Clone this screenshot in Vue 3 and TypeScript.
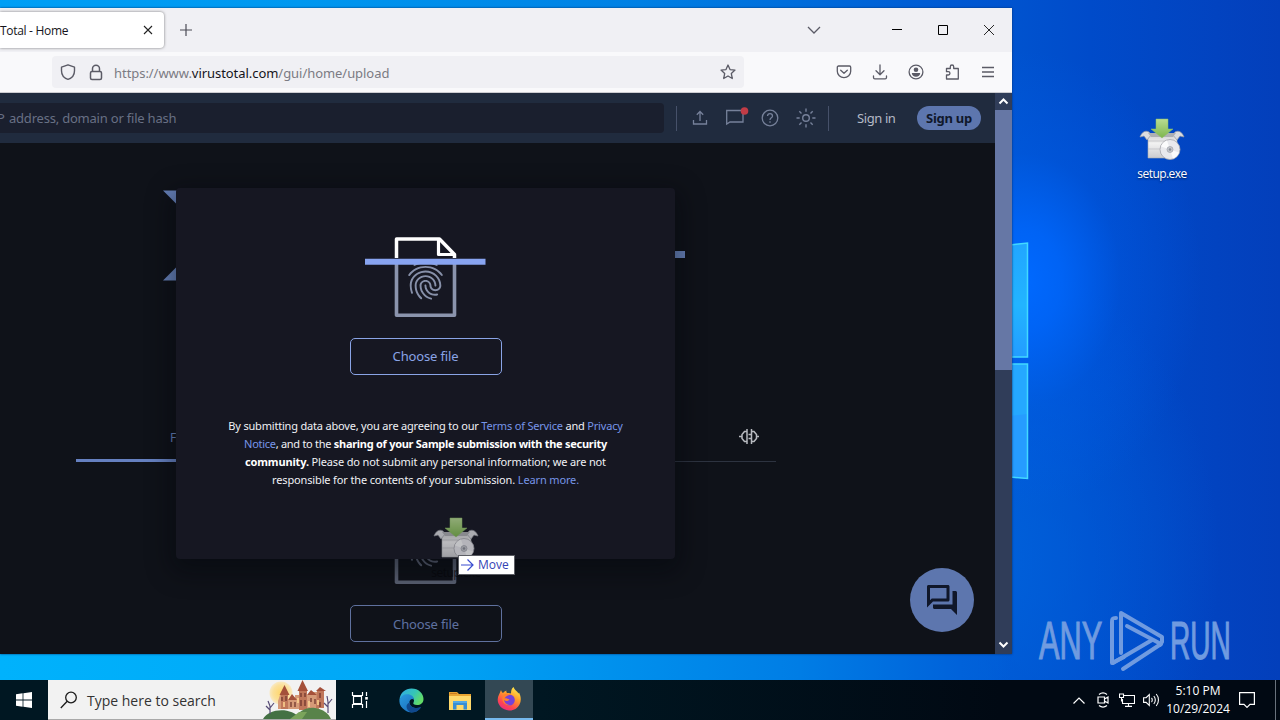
<script setup lang="ts">
interface Segment { text: string; kind?: 'link' | 'strong' }
const terms: Segment[][] = [
  [
    { text: 'By submitting data above, you are agreeing to our ' },
    { text: 'Terms of Service', kind: 'link' },
    { text: ' and ' },
    { text: 'Privacy', kind: 'link' },
  ],
  [
    { text: 'Notice', kind: 'link' },
    { text: ', and to the ' },
    { text: 'sharing of your Sample submission with the security', kind: 'strong' },
  ],
  [
    { text: 'community.', kind: 'strong' },
    { text: ' Please do not submit any personal information; we are not' },
  ],
  [
    { text: 'responsible for the contents of your submission. ' },
    { text: 'Learn more.', kind: 'link' },
  ],
]
</script>

<template>
  <div class="screen">
    <svg class="symbols" width="0" height="0">
      <defs>
        <linearGradient id="arrowGreen" x1="0" y1="0" x2="0" y2="1">
          <stop offset="0" stop-color="#b9dc93" /><stop offset="1" stop-color="#7db64c" />
        </linearGradient>
        <linearGradient id="boxGrey" x1="0" y1="0" x2="0" y2="1">
          <stop offset="0" stop-color="#cfcfd0" /><stop offset=".4" stop-color="#f1f1f1" /><stop offset="1" stop-color="#cccccf" />
        </linearGradient>
        <symbol id="setup" viewBox="0 0 46 43">
          <path d="M9 16h29v21l-2 3H9z" fill="url(#boxGrey)" stroke="#a9abb0" stroke-width=".6" />
          <path d="M9 23h20M9 31h16" stroke="#bcbcc0" stroke-width=".7" />
          <path d="M10 14C6 12 3 14 1 19l4-1 3 4 4-5zM36 14c4-2 7 0 9 5l-4-1-3 4-4-5z" fill="#dcdde0" stroke="#9a9ca3" stroke-width=".7" />
          <path d="M9 15h28l-3 4H12z" fill="#aeb0b3" />
          <path d="M17 1h12v10h5L23 20 12 11h5z" fill="url(#arrowGreen)" stroke="#8fbf68" stroke-width=".5" />
          <circle cx="31" cy="31.500" r="10" fill="#e9e9ed" stroke="#a4a5ab" stroke-width=".8" />
          <path d="m31 31.500-9-3a9 9 0 0 1 6-6zM31 31.500l9 3a9 9 0 0 1-6 6z" fill="#fff" opacity=".8" />
          <circle cx="31" cy="31.500" r="3" fill="#c7c9ce" stroke="#9496a0" stroke-width=".6" />
          <circle cx="31" cy="31.500" r="1.300" fill="#8a8d96" />
        </symbol>
        <symbol id="doc" viewBox="0 0 122 82">
          <g fill="none" stroke-linejoin="round">
            <path d="M31.500 22V3h43L89.500 18.500V22" stroke="#fff" stroke-width="3.500" />
            <path d="M73.500 3v15.500H89" stroke="#fff" stroke-width="3.200" />
            <path d="M31.500 26v53.200h58V26" stroke="#8b94ad" stroke-width="3.600" />
          </g>
          <path transform="translate(37.500 21.400) scale(1.920)" fill="#8790a9" d="M17.810 4.470c-.08 0-.16-.02-.23-.06C15.660 3.420 14 3 12.010 3c-1.980 0-3.860.47-5.570 1.410-.24.13-.54.04-.68-.2-.13-.24-.04-.55.2-.68C7.820 2.520 9.860 2 12.010 2c2.130 0 3.990.47 6.030 1.520.25.13.34.43.21.67-.09.18-.26.28-.44.28zM3.500 9.720c-.1 0-.2-.03-.29-.09-.23-.16-.28-.47-.12-.7.99-1.400 2.250-2.500 3.750-3.270C9.980 4.040 14 4.030 17.150 5.650c1.500.77 2.760 1.860 3.750 3.250.16.22.11.54-.12.7-.23.16-.54.11-.7-.12-.9-1.260-2.040-2.250-3.390-2.940-2.870-1.470-6.540-1.470-9.400.01-1.360.7-2.500 1.700-3.400 2.960-.08.14-.23.21-.39.21zm6.250 12.070c-.13 0-.26-.05-.35-.15-.87-.87-1.340-1.430-2.010-2.640-.69-1.230-1.050-2.730-1.050-4.340 0-2.970 2.540-5.390 5.660-5.390s5.660 2.420 5.660 5.390c0 .28-.22.5-.5.5s-.5-.22-.5-.5c0-2.420-2.090-4.390-4.660-4.390-2.570 0-4.660 1.970-4.660 4.390 0 1.440.32 2.770.93 3.850.64 1.150 1.080 1.640 1.850 2.420.19.2.19.51 0 .71-.11.1-.24.15-.37.15zm7.170-1.850c-1.190 0-2.240-.3-3.100-.89-1.490-1.010-2.380-2.650-2.380-4.390 0-.28.22-.5.5-.5s.5.22.5.5c0 1.410.72 2.740 1.940 3.560.71.48 1.540.71 2.540.71.24 0 .64-.03 1.040-.1.27-.05.53.13.58.41.05.27-.13.53-.41.58-.57.11-1.070.12-1.210.12zM14.910 22c-.04 0-.09-.01-.13-.02-1.590-.44-2.630-1.030-3.720-2.100-1.400-1.390-2.170-3.240-2.170-5.220 0-1.620 1.380-2.940 3.080-2.940 1.700 0 3.080 1.320 3.080 2.940 0 1.070.93 1.940 2.080 1.940s2.080-.87 2.080-1.940c0-3.770-3.250-6.830-7.250-6.830-2.840 0-5.440 1.580-6.610 4.030-.39.81-.59 1.760-.59 2.800 0 .78.07 2.010.67 3.610.1.26-.03.55-.29.64-.26.1-.55-.04-.64-.29-.49-1.310-.73-2.610-.73-3.960 0-1.200.23-2.290.68-3.240 1.330-2.790 4.280-4.600 7.510-4.600 4.550 0 8.250 3.510 8.250 7.830 0 1.620-1.380 2.940-3.080 2.940s-3.080-1.320-3.080-2.940c0-1.070-.93-1.940-2.080-1.940s-2.080.87-2.080 1.940c0 1.710.66 3.310 1.870 4.510.95.94 1.860 1.460 3.270 1.850.27.07.42.35.35.61-.05.23-.26.38-.47.38z" />
          <path d="M0 22.800h120.500v6H0z" fill="#88a4f1" />
        </symbol>
      </defs>
    </svg>

    <main class="desktop">
      <svg class="wallpaper-logo" viewBox="0 0 30 240" width="30" height="240">
        <defs>
          <linearGradient id="pane" x1="0" y1="0" x2="0" y2="1">
            <stop offset="0" stop-color="#21a6ff" /><stop offset=".55" stop-color="#22b4ff" /><stop offset="1" stop-color="#239cff" />
          </linearGradient>
        </defs>
        <path d="M0 5 18 3v114H0z" fill="url(#pane)" /><path d="M0 124h18v115l-18-2z" fill="#269cff" /><path d="M0 124h18v50L0 176z" fill="#25a8ff" />
        <path d="M0 5 17.500 3v114H0M0 124h17.500v114.500L0 237" fill="none" stroke="#42d9ff" stroke-width="1.500" />
      </svg>

      <div class="shortcut">
        <svg width="46" height="43"><use href="#setup" /></svg>
        <span>setup.exe</span>
      </div>

      <div class="watermark">
        <span class="any">ANY</span>
        <svg width="56" height="62" viewBox="0 0 56 62" fill="none" stroke="#709be0" stroke-width="4" stroke-linejoin="round" stroke-linecap="round">
          <path d="M7 8C3 8 3 9 3 12v41L15 47" /><path d="M12 43V3l41 24v5l-2 3" /><path d="m18 16 34 18-38 25" /><path d="M4 53 43 30" />
        </svg>
        <span class="run">RUN</span>
      </div>

      <section class="window">
        <div class="tabbar">
          <div class="tab"><span class="tab-title">Total - Home</span>
            <svg width="10" height="10" viewBox="0 0 10 10"><path d="m1 1 8 8M9 1 1 9" stroke="#222" stroke-width="1.100" /></svg>
          </div>
          <svg class="new-tab" width="12" height="12" viewBox="0 0 12 12"><path d="M6 0v12M0 6h12" stroke="#4b4b55" stroke-width="1.200" /></svg>
          <svg class="tabs-more" width="14" height="8" viewBox="0 0 14 8"><path d="m1 1 6 6 6-6" fill="none" stroke="#5b5b66" stroke-width="1.300" /></svg>
          <div class="caption">
            <svg width="10" height="10" viewBox="0 0 10 10"><path d="M0 4.500h10" stroke="#000" /></svg>
            <svg width="10" height="10" viewBox="0 0 10 10"><path d="M.500.500h9v9h-9z" fill="none" stroke="#000" /></svg>
            <svg width="10" height="10" viewBox="0 0 10 10"><path d="m0 0 10 10M10 0 0 10" stroke="#111" stroke-width=".9" /></svg>
          </div>
        </div>

        <div class="toolbar">
          <div class="urlbar">
            <svg width="16" height="16" viewBox="0 0 16 16" fill="none" stroke="#5b5b66" stroke-width="1.400" stroke-linejoin="round"><path d="m8 .8 6.500 2.400v3.500C14.500 11 12 14 8 15.300 4 14 1.500 11 1.500 6.700V3.200z" /></svg>
            <svg class="lock" width="14" height="17" viewBox="0 0 14 17" fill="none" stroke="#5b5b66" stroke-width="1.500"><rect x="1.500" y="7.500" width="11" height="8" rx="1.500" /><path d="M3.500 7.500V4.800a3.500 3.500 0 0 1 7 0v2.700" /></svg>
            <span class="url">https://www.<b>virustotal.com</b>/gui/home/upload</span>
            <svg width="16" height="16" viewBox="0 0 16 16" fill="none" stroke="#5b5b66" stroke-width="1.300" stroke-linejoin="round"><path d="m8 1 2 4.600 5 .5-3.700 3.400 1 5L8 12l-4.300 2.500 1-5L1 6.100l5-.5z" /></svg>
          </div>
          <div class="tools">
            <svg width="16" height="16" viewBox="0 0 16 16" fill="none" stroke="#5b5b66" stroke-width="1.300" stroke-linecap="round" stroke-linejoin="round"><path d="M2.500 2h11c.7 0 1.200.5 1.200 1.200v4c0 3.500-3 6.500-6.700 6.500S1.300 10.700 1.300 7.200v-4C1.300 2.500 1.800 2 2.500 2zM4.700 6.300 8 9.300l3.300-3" /></svg>
            <svg width="16" height="16" viewBox="0 0 16 16" fill="none" stroke="#5b5b66" stroke-width="1.300" stroke-linecap="round" stroke-linejoin="round"><path d="M8 1v9.500M4 6.800l4 4 4-4M1.500 12v1.500c0 .8.500 1.300 1.300 1.300h10.400c.8 0 1.300-.5 1.300-1.300V12" /></svg>
            <svg width="16" height="16" viewBox="0 0 16 16"><circle cx="8" cy="8" r="6.900" fill="none" stroke="#5b5b66" stroke-width="1.300" /><circle cx="8" cy="5.700" r="2.300" fill="#5b5b66" /><path d="M3.800 9h8.400c0 2.200-1.900 3.700-4.200 3.700S3.800 11.200 3.800 9z" fill="#5b5b66" /></svg>
            <svg width="16" height="16" viewBox="0 0 16 16" fill="none" stroke="#5b5b66" stroke-width="1.300" stroke-linejoin="round"><path d="M2.500 15v-4h1.800a1.600 1.600 0 0 0 0-3.300H2.500V4.500h3.800V2.700a1.700 1.700 0 0 1 3.400 0v1.800h4.600V15z" /></svg>
            <svg width="16" height="16" viewBox="0 0 16 16"><path d="M2 3.500h12M2 8h12M2 12.500h12" stroke="#5b5b66" stroke-width="1.300" /></svg>
          </div>
        </div>

        <div class="viewport">
          <div class="page">
            <header class="site-header">
              <div class="search"><span class="cut">P</span><span>address, domain or file hash</span></div>
              <i class="sep"></i>
              <svg class="upload" width="16" height="16" viewBox="0 0 16 16" fill="none" stroke="#76819a" stroke-width="1.300"><path d="M8 11V1.500M4.800 4.700 8 1.500l3.200 3.200M1.500 10v4h13v-4" /></svg>
              <svg class="chat" width="24" height="20" viewBox="0 0 24 20"><path d="M1.700 4.500H18V16H5l-3.300 2z" fill="none" stroke="#76819a" stroke-width="1.300" /><circle cx="19.500" cy="5" r="3.800" fill="#c23c46" /></svg>
              <svg class="help" width="18" height="18" viewBox="0 0 18 18" fill="none" stroke="#76819a" stroke-width="1.300"><circle cx="9" cy="9" r="7.800" /><path d="M6.500 7c.2-3.200 5-3 5 0 0 1.900-2.500 1.800-2.500 4M9 12.200v1.600" /></svg>
              <svg class="sun" width="20" height="20" viewBox="0 0 20 20" fill="none" stroke="#76819a" stroke-width="1.400"><circle cx="10" cy="10" r="3.300" /><path d="M10 .5v3.200M10 16.300v3.200M.5 10h3.200M16.300 10h3.200M3.300 3.300l2.200 2.200M14.500 14.500l2.200 2.200M3.300 16.700l2.200-2.200M14.500 5.500l2.200-2.200" /></svg>
              <i class="sep second"></i>
              <span class="signin">Sign in</span>
              <span class="signup">Sign up</span>
            </header>
            <div class="home">
              <svg class="brand" width="522" height="92" viewBox="0 0 522 92"><path d="M0 1.500h24v24zM0 91.500h24v-24zM500 62h22v7h-22z" fill="#6680b8" /></svg>
              <nav class="tabs">
                <span class="file-tab">FILE</span>
                <svg width="20" height="18" viewBox="0 0 20 18" fill="none" stroke="#b8bac0" stroke-width="1.500"><path d="M0 8.500h3M17 8.500h3M8 1v15M12.500 1v15M8 3.500H5.500L3 6.500v4l2.500 3H8M12.500 3.500H15l2.500 3v4l-2.500 3h-2.500M9.500 6.500h3M9.500 10.500h3" /></svg>
              </nav>
              <svg class="dim-doc" width="122" height="82"><use href="#doc" /></svg>
              <div class="choose dim">Choose file</div>
            </div>
            <div class="modal">
              <svg width="122" height="82"><use href="#doc" /></svg>
              <div class="choose">Choose file</div>
              <p class="terms">
                <span v-for="(line, i) in terms" :key="i" class="line" :class="'line-' + i"><span v-for="(s, j) in line" :key="j" :class="s.kind">{{ s.text }}</span></span>
              </p>
            </div>
            <div class="fab">
              <svg width="36" height="36" viewBox="0 0 24 24" fill="#10172a"><path d="M15 4v7H5.170L4 12.170V4h11m1-2H3c-.55 0-1 .45-1 1v14l4-4h10c.55 0 1-.45 1-1V3c0-.55-.45-1-1-1zm5 4h-2v9H6v2c0 .55.45 1 1 1h11l4 4V7c0-.55-.45-1-1-1z" /></svg>
            </div>
          </div>
          <div class="scrollbar">
            <svg width="17" height="17" viewBox="0 0 17 17"><path d="m4.500 10.500 4-4 4 4" fill="none" stroke="#fff" stroke-width="2" /></svg>
            <div class="thumb"></div>
            <svg width="17" height="17" viewBox="0 0 17 17"><path d="m4.500 5.500 4 4 4-4" fill="none" stroke="#fff" stroke-width="2" /></svg>
          </div>
        </div>
      </section>

      <div class="ghost">
        <svg width="46" height="43"><use href="#setup" /></svg>
        <span>setup.exe</span>
      </div>
      <div class="drop-tip">
        <svg width="13" height="12" viewBox="0 0 13 12"><path d="M0 6h12M6.500.500 12 6l-5.500 5.500" fill="none" stroke="#3a4cd0" stroke-width="1.200" /></svg>
        <span>Move</span>
      </div>
    </main>

    <footer class="taskbar">
      <div class="start"><svg width="16" height="16" viewBox="0 0 16 16" fill="#fff"><path d="m0 2.200 6.600-.9v6.300H0zM7.400 1.200 16 0v7.600H7.400zM0 8.400h6.600v6.300L0 13.800zM7.400 8.400H16V16l-8.600-1.200z" /></svg></div>
      <div class="search-box">
        <svg width="18" height="18" viewBox="0 0 18 18" fill="none" stroke="#1b1b1b" stroke-width="1.300"><circle cx="11" cy="6.500" r="5.300" /><path d="M7.200 10.300.8 17" /></svg>
        <span>Type here to search</span>
        <svg class="castle" width="72" height="39" viewBox="0 0 72 39">
          <defs><radialGradient id="moon"><stop offset="0" stop-color="#ffd66b" /><stop offset=".7" stop-color="#fbe09a" /><stop offset="1" stop-color="#f8e9c4" /></radialGradient></defs>
          <circle cx="18" cy="13" r="11.500" fill="url(#moon)" />
          <path d="M17 15h8v5h7v-5h15v-3h9v17H15v-8z" fill="#d69a78" />
          <path d="M54 10h7v18h-8zM36 10h8v20h-8zM18 14h7v15h-7z" fill="#c0775a" />
          <path d="m16.500 15 5-10 5 10zM34.500 11l5-11 5.500 11zM25 20l4-6 5 6zM44 15l4-5 6 5zM53 11l4-4 6 4z" fill="#a4503a" />
          <path d="M19 17v4M23 16v5M28 22v5M32 22v5M38 13v4M42 13v4M38 20v6M42 20v6M48 18v4M52 19v5M57 13v5M57 22v5" stroke="#70362d" stroke-width="1.300" />
          <path d="M21 22v5M35 18v5M46 21v6M55 20v5" stroke="#ffd793" stroke-width="1.500" />
          <path d="M32 39c3-8 11-12 20-11 8 1 14 6 16 11z" fill="#58834a" /><path d="M0 39c6-10 27-13 38 0z" fill="#447143" />
          <path d="M36 32h8l-5 7H27z" fill="#7aa45b" />
          <path d="M7 34v-8m0 4-4-4m4 2 4-5m-4 3-2-5M65 33V22m0 5-4-4m4 1 4-5m-4 3-1-6" stroke="#574c76" stroke-width="1.200" fill="none" />
        </svg>
      </div>
      <div class="task"><svg width="18" height="18" viewBox="0 0 18 18" fill="none" stroke="#fff" stroke-width="1.200"><path d="M1.500 1v3.500h10V1M1.500 17v-3.500h10V17M2.500 5.500h8v7h-8zM15.500 1v4M15.500 10v7" /><path d="M14.200 6h2.600v2.600h-2.600z" fill="#fff" stroke="none" /></svg></div>
      <div class="task edge"><svg width="25" height="25" viewBox="0 0 25 25">
        <defs>
          <linearGradient id="edgeTop" x1="0" y1="0" x2="1" y2=".5"><stop offset="0" stop-color="#31a9ea" /><stop offset=".6" stop-color="#35c5b7" /><stop offset="1" stop-color="#62dc68" /></linearGradient>
          <linearGradient id="edgeBody" x1="0" y1="0" x2="1" y2="1"><stop offset="0" stop-color="#2b9cdf" /><stop offset="1" stop-color="#1562b3" /></linearGradient>
        </defs>
        <path d="M.5 12C1 4.500 6.500.5 12.500.5c7 0 12 5 12 10.500 0 4-3 6-6.500 6-3 0-4.300-1.200-3.500-2.500 1.500-2.500 0-6.500-5-6.500-4 0-7.500 1-9 4z" fill="url(#edgeTop)" />
        <path d="M.5 12c1-4 4-5.800 8-5.800 3.500 0 6.500 2.300 6.500 5.500-2-2-5 0-4.500 3 .5 4.500 6 6.500 11.500 4.500-4 6-11 6.500-16 3C2 19.500 0 16 .5 12z" fill="url(#edgeBody)" />
        <path d="M10.500 14.700c-4 1-4 6.800.5 9.300 5 1.400 9-1.500 11-4.800-5.500 2-11 0-11.500-4.500z" fill="#10488c" />
      </svg></div>
      <div class="task"><svg width="22" height="19" viewBox="0 0 22 19"><path d="M0 1h8l2 2h12v16H0z" fill="#e9a532" /><path d="M0 5h22v14H0z" fill="#ffd96b" /><path d="M1 2h7v1H1z" fill="#c97b20" /><path d="M4 10h14v8.500h-3.500V14h-7v4.500H4z" fill="#388ed4" /><path d="M4 10h14v2H4z" fill="#54a9e5" /></svg></div>
      <div class="task active"><svg width="24" height="24" viewBox="0 0 24 24">
        <defs><linearGradient id="fox" x1=".8" y1="0" x2=".25" y2="1"><stop offset="0" stop-color="#fff04f" /><stop offset=".4" stop-color="#ff9c2a" /><stop offset=".75" stop-color="#ff4550" /><stop offset="1" stop-color="#e42a85" /></linearGradient></defs>
        <path d="M4 3c.5 1.500 1 2.400 2 3 1-1 2-2 3.500-2.500-.5 1 0 2 .5 2.500 2 0 3 .3 4 .5 0-3 .5-5 2.500-6.500 1 3 3.500 4 5 6.500l.5-1c2 4 2.500 8 .5 12-2 4-6 6.300-10.500 6C5 23 .5 18 .7 12.500.8 9 2.500 7 4 3z" fill="url(#fox)" />
        <circle cx="12.300" cy="13" r="5.500" fill="#7542d8" /><path d="M7 13c2 2 4 1 5.500-.5-2-.5-3-1.500-5-1 1.500-3 4.500-4 7-3.500-3-2.500-8-2-9 2-1 5 3 9 8 8.500-4-1-6-2.500-6.500-5.500z" fill="#ff812d" />
      </svg></div>
      <div class="tray">
        <svg class="up" width="12" height="7" viewBox="0 0 12 7"><path d="m.5 6.500 5.500-5.500 5.500 5.500" fill="none" stroke="#fff" stroke-width="1.200" /></svg>
        <svg class="meet" width="12" height="16" viewBox="0 0 12 16" fill="none" stroke="#fff" stroke-width="1.200"><path d="M2 2.500c2.500-2 5.500-2 8 0M2 13.500c2.500 2 5.500 2 8 0M1 5h6.500v6H1zM7.500 7 11 5v6L7.500 9" /></svg>
        <svg class="net" width="16" height="14" viewBox="0 0 16 14" fill="none" stroke="#fff" stroke-width="1.100"><path d="M5 2.500h10.500v8H3.500V6M9.500 10.500v3M6 13.400h7M.5 1h4v3.500h-4zM2.500 4.500v4" /></svg>
        <svg class="vol" width="17" height="14" viewBox="0 0 17 14" fill="none" stroke="#fff" stroke-width="1.100"><path d="M.6 4.700h2.500L6.300 1.500v11L3.100 9.400H.6zM8.500 5c1 1 1 3 0 4M10.800 3c2 2.200 2 5.800 0 8M13.200 1c3 3.300 3 8.700 0 12" /></svg>
        <div class="clock"><span>5:10 PM</span><span>10/29/2024</span></div>
        <svg class="note" width="16" height="16" viewBox="0 0 16 16"><path d="M.6.600h14.800v11.800H11L8 15.400l-3-3H.6z" fill="none" stroke="#fff" stroke-width="1.200" /></svg>
        <i class="peek"></i>
      </div>
    </footer>
  </div>
</template>

<style>
html, body { margin: 0; overflow: hidden; }
</style>

<style scoped>
.screen { width: 1280px; height: 720px; display: flex; flex-direction: column; overflow: hidden; font-family: "Open Sans", "Noto Sans", sans-serif; }
.screen * { box-sizing: border-box; }
.screen span { white-space: pre; }
.symbols { position: absolute; }
svg { display: block; flex: none; }
.desktop {
  position: relative; height: 680px; flex: none; overflow: hidden;
  background:
    radial-gradient(ellipse 180px 230px at 1022px 280px, #0069ff 0%, rgba(0, 104, 255, .8) 22%, rgba(0, 96, 240, .3) 55%, rgba(0, 90, 230, 0) 100%),
    linear-gradient(90deg, #00b2fc 0, #00a7f6 400px, #007de5 800px, #0062da 960px, rgba(0, 90, 214, 0) 1012px) 0 650px / 100% 30px no-repeat,
    radial-gradient(ellipse 220px 300px at 1000px 560px, rgba(0, 100, 222, .75), rgba(0, 90, 214, 0)),
    linear-gradient(90deg, #009ff6 0, #0098f0 300px, #0080e4 640px, #0058d2 960px, #004bca 1090px, #033fbb 1280px);
}
.wallpaper-logo { position: absolute; left: 1010px; top: 240px; }
.shortcut { position: absolute; left: 1122px; top: 118px; width: 80px; display: flex; flex-direction: column; align-items: center; gap: 4px; color: #fff; font-size: 12px; letter-spacing: -.55px; line-height: 18px; text-shadow: 0 1px 2px #001b55; }
.watermark { position: absolute; left: 1039px; top: 610px; width: 193px; height: 62px; display: flex; align-items: center; color: #709be0; font: 53px/62px "Liberation Sans", sans-serif; }
.watermark span { display: block; width: 64px; flex: none; transform-origin: left; transform: scaleX(.58); -webkit-text-stroke: 1.2px #709be0; }
.watermark svg { margin-left: 6px; }
.watermark .run { margin-left: 5px; transform: scaleX(.53); }

.window { position: absolute; left: 0; top: 8px; width: 1012px; height: 646px; display: flex; flex-direction: column; background: #f9f9fb; box-shadow: 0 0 2px #00316d; }
.tabbar { height: 44px; flex: none; display: flex; align-items: center; background: #f0f0f4; }
.tab { width: 164px; height: 36px; display: flex; align-items: center; justify-content: space-between; padding-right: 11px; background: #fff; border-radius: 0 4px 4px 0; box-shadow: 0 0 3px rgba(0, 0, 0, .5); color: #15141a; font-size: 12px; letter-spacing: -.3px; }
.tab-title { margin-top: 1px; }
.new-tab { margin-left: 16px; }
.tabs-more { margin-left: auto; margin-right: 71px; }
.caption { display: flex; gap: 36px; margin-right: 18px; }
.toolbar { height: 41px; flex: none; display: flex; align-items: center; border-bottom: 1px solid #ccccd1; }
.urlbar { margin-left: 52px; width: 692px; height: 32px; display: flex; align-items: center; padding: 0 8px; background: #f0f0f4; border-radius: 4px; }
.lock { margin-left: 13px; }
.url { flex: 1; margin: 2px 0 0 11px; font: 13px/20px "Noto Sans", sans-serif; letter-spacing: -.05px; color: #7b7b83; }
.url b { font-weight: 400; color: #15141a; }
.tools { margin-left: auto; margin-right: 16px; display: flex; gap: 20px; }

.viewport { flex: 1; min-height: 0; display: flex; }
.page { position: relative; width: 995px; background: #0f1219; overflow: hidden; font-family: "Noto Sans", sans-serif; }
.site-header { height: 50px; display: flex; align-items: center; background: #202b3e; }
.search { width: 664px; height: 30px; display: flex; align-items: center; background: #1a1f2e; border-radius: 0 4px 4px 0; color: #687085; font-size: 13px; letter-spacing: -.21px; }
.cut { width: 9px; text-indent: -3px; overflow: hidden; }
.sep { width: 1px; height: 25px; margin-left: 12px; background: #46516a; }
.upload { margin-left: 14.500px; }
.chat { margin-left: 17px; margin-top: -4px; }
.help { margin-left: 12px; }
.sun { margin-left: 17px; }
.second { margin-left: 12.500px; }
.signin { margin-left: 28px; font-size: 13px; letter-spacing: -.4px; color: #b4bac6; }
.signup { margin-left: auto; margin-right: 14px; width: 64px; height: 24px; border-radius: 12px; background: #5d76ae; color: #10182b; font: 700 13px/24px "Noto Sans", sans-serif; letter-spacing: -.25px; text-align: center; }
.home { width: 700px; margin-left: 76px; padding-top: 46px; display: flex; flex-direction: column; align-items: center; }
.brand { margin-left: -4px; }
.tabs { width: 700px; height: 50px; margin-top: 131px; display: flex; align-items: center; border-bottom: 1px solid #2d3340; }
.file-tab { width: 233px; height: 50px; padding-left: 94px; line-height: 51px; font-size: 12px; color: #6580bb; border-bottom: 3px solid #6580c0; }
.tabs svg { margin-left: 430px; }
.dim-doc { margin-top: 41px; opacity: .6; }
.choose { width: 152px; height: 37px; border: 1px solid #8aa4e6; border-radius: 5px; color: #8aa4e6; font-size: 13px; letter-spacing: -.15px; line-height: 35px; text-align: center; }
.dim { margin-top: 20px; line-height: 37px; opacity: .65; }
.modal { position: absolute; left: 176px; top: 95px; width: 499px; height: 371px; display: flex; flex-direction: column; align-items: center; background: #161722; border-radius: 4px; box-shadow: 0 8px 24px 6px rgba(3, 5, 10, .4); padding-top: 48px; }
.modal .choose { margin-top: 20px; }
.terms { margin: 42px 0 0; font-size: 11px; line-height: 18px; color: #f0f1f5; }
.line { display: block; text-align: center; }
.line-0 { letter-spacing: -.19px; }
.line-1 { letter-spacing: -.28px; }
.line-2 { letter-spacing: -.15px; }
.line-3 { letter-spacing: -.14px; }
.link { color: #7695e8; }
.strong { font-weight: 700; color: #fff; }
.fab { position: absolute; left: 910px; top: 475px; width: 64px; height: 64px; display: flex; align-items: center; justify-content: center; border-radius: 50%; background: #5d76ae; }
.scrollbar { width: 17px; display: flex; flex-direction: column; justify-content: space-between; background: #303d59; }
.thumb { height: 260px; margin-bottom: auto; background: #6677a5; }

.ghost { position: absolute; left: 416px; top: 517px; width: 80px; display: flex; flex-direction: column; align-items: center; gap: 4px; opacity: .75; color: #06070b; font-size: 12px; letter-spacing: -.55px; line-height: 18px; }
.drop-tip { position: absolute; left: 458px; top: 555px; width: 57px; height: 20px; display: flex; align-items: center; gap: 4px; padding: 0 0 1px 2px; background: #fff; border: 1px solid #5c5e65; color: #3443b4; font-size: 12px; }

.taskbar { height: 40px; flex: none; display: flex; background: linear-gradient(90deg, #001722 0, #001722 540px, #010913 1000px); color: #fff; }
.start { width: 48px; display: flex; align-items: center; justify-content: center; }
.search-box { width: 288px; display: flex; align-items: center; padding-left: 12px; background: #f2f2f2; border-bottom: 1px solid #a9a9a9; color: #333; font-size: 14px; }
.search-box span { margin: 2px 0 0 9px; }
.castle { margin: 0 1px 0 auto; align-self: flex-end; }
.task { width: 49.670px; padding-right: 1px; display: flex; align-items: center; justify-content: center; }
.edge { padding: 0 0 0 2px; }
.active { width: 48px; padding: 0; background: #334854; border-bottom: 2px solid #76b9ed; }
.tray { margin-left: auto; width: 207px; display: flex; align-items: center; }
.meet { margin-left: 12px; }
.net { margin-left: 10px; }
.vol { margin-left: 8px; }
.clock { width: 62px; margin-left: 7px; display: flex; flex-direction: column; align-items: center; font-size: 12px; line-height: 18px; }
.note { margin-left: 10px; }
.peek { margin-left: auto; width: 5px; height: 40px; border-left: 1px solid #69727c; }
</style>
